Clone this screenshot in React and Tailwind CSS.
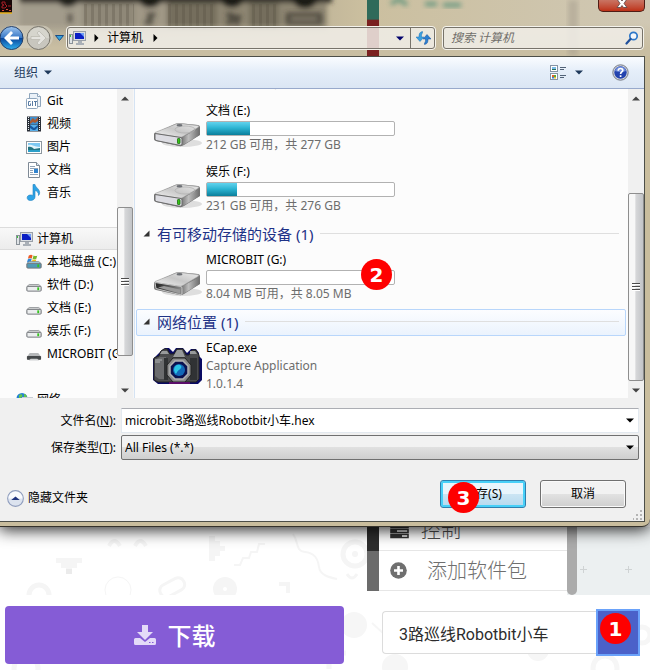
import React from "react";

const uiFont = "font-['Noto_Sans','Noto_Sans_CJK_SC',sans-serif]";

function GlassBackdrop() {
  return (
    <svg className="absolute inset-0 h-full w-full" viewBox="0 0 650 57" preserveAspectRatio="none" aria-hidden="true">
      <defs>
        <filter id="soft" x="-20%" y="-60%" width="140%" height="220%">
          <feGaussianBlur stdDeviation="2.500" />
        </filter>
        <linearGradient id="glass" x1="0" x2="1" y1="0" y2="0">
          <stop offset="0" stopColor="#aea797" />
          <stop offset=".5" stopColor="#c2b79a" />
          <stop offset=".56" stopColor="#cbbf9f" />
          <stop offset="1" stopColor="#d0c8b4" />
        </linearGradient>
        <linearGradient id="floor" x1="0" x2="0" y1="0" y2="1">
          <stop offset=".4" stopColor="#c9bea2" stopOpacity="0" />
          <stop offset=".85" stopColor="#c9bea2" />
        </linearGradient>
        <pattern id="ribs" width="7" height="30" patternUnits="userSpaceOnUse">
          <rect width="3" height="30" fill="#514b3e" opacity=".28" />
        </pattern>
      </defs>
      <rect width="650" height="57" fill="url(#glass)" />
      <g filter="url(#soft)">
        <rect x="20" y="-8" width="63" height="40" fill="#a29b8b" />
        <rect x="83" y="-8" width="52" height="40" fill="#8f8878" />
        <rect x="135" y="-8" width="32" height="40" fill="#a09886" />
        <rect x="167" y="-8" width="50" height="38" fill="#756e5d" />
        <rect x="217" y="-8" width="32" height="38" fill="#8e8672" />
        <rect x="249" y="-8" width="30" height="38" fill="#756e5d" />
        <rect x="279" y="-8" width="48" height="38" fill="#8e8672" />
        <rect x="20" y="-8" width="312" height="11" fill="#35322b" />
        <circle cx="68" cy="-5" r="12" fill="#24221f" />
        <circle cx="150" cy="-5" r="13" fill="#1b1a18" />
        <circle cx="232" cy="-5" r="13" fill="#1b1a18" />
        <circle cx="305" cy="-5" r="14" fill="#1b1a18" />
      </g>
      <rect x="84" y="4" width="50" height="26" fill="url(#ribs)" />
      <rect x="168" y="4" width="48" height="26" fill="url(#ribs)" />
      <rect x="250" y="4" width="29" height="26" fill="url(#ribs)" />
      <rect width="650" height="57" fill="url(#floor)" />
      <g filter="url(#soft)" opacity=".75" stroke="#34322c" strokeWidth="4" fill="none">
        <path d="M70 14v9M147 15h6l-6 8h6M226 15h5v8h-5M234 15l3 8 3-8M288 15h32v8h-32z" />
      </g>
      <rect x="367" y="0" width="12" height="22" fill="#2f6a5a" />
      <rect x="367" y="20" width="12" height="37" fill="#7a2020" />
      <g filter="url(#soft)" stroke="#4e8c76" strokeWidth="4" opacity=".8">
        <path d="M391 4l8-5 8 6M425 4h12M443 5h18" fill="none" />
      </g>
      <rect x="568" y="0" width="10" height="57" fill="#a79f8f" opacity=".55" filter="url(#soft)" />
      <rect x="1" y="26" width="52" height="23" rx="11" fill="#d9d4c5" opacity=".6" />
    </svg>
  );
}

function ComputerIcon() {
  return (
    <svg width="17" height="16" viewBox="0 0 17 16" className="shrink-0" aria-hidden="true">
      <rect x=".5" y="4.500" width="3" height="9" fill="#dfe3e6" stroke="#8a9299" />
      <rect x="1" y="5" width="1" height="2" fill="#38c038" />
      <rect x="4.500" y="1.500" width="12" height="9" fill="#d9dde2" stroke="#9aa0a8" />
      <rect x="6" y="3" width="9" height="6" fill="#0a1fc4" />
      <path d="M11 3h4v4z" fill="#6f9cf5" />
      <path d="M9 11h4v2h2v2H7v-2h2z" fill="#aab0b7" />
    </svg>
  );
}

function GitIcon() {
  return (
    <svg width="16" height="16" viewBox="0 0 16 16" className="shrink-0" aria-hidden="true">
      <path d="M3.500.5h8l3 3v10h-11z" fill="#eaf1f8" stroke="#8fa6bd" />
      <path d="M11.500.5v3h3" fill="#fff" stroke="#8fa6bd" />
      <rect x=".5" y="5.500" width="11" height="10" rx="1" fill="#fff" stroke="#8fa6bd" />
      <path d="M4.500 8.500h-2v4h2v-2M6.500 8v5M8 8.500h3M9.500 8.500V13" fill="none" stroke="#587ba3" />
    </svg>
  );
}

function VideoIcon() {
  return (
    <svg width="16" height="16" viewBox="0 0 16 16" className="shrink-0" aria-hidden="true">
      <rect x="1" y=".5" width="14" height="15" fill="#2a2f38" />
      <rect x="4" y="1" width="8" height="7" fill="#3e8fd0" />
      <rect x="4" y="8.500" width="8" height="6.500" fill="#58aee8" />
      <path d="M4 5l3-3 2 2 3-3v4l-3 2-2-1-3 2z" fill="#a85a33" />
      <path d="M4 9l4 3 4-3v2l-3 3H7l-3-2z" fill="#17579c" />
      <path d="M2.500 1v14M13.500 1v14" stroke="#e8eef2" strokeDasharray="1 1" />
    </svg>
  );
}

function PictureIcon() {
  return (
    <svg width="16" height="16" viewBox="0 0 16 16" className="shrink-0" aria-hidden="true">
      <rect x=".5" y="2.500" width="15" height="12" fill="#fff" stroke="#8d979f" />
      <rect x="2" y="4" width="12" height="9" fill="#7cc8f2" />
      <path d="M2 6c4-1 6 2 12 2v2H2z" fill="#e2f4fb" />
      <path d="M2 8c3-1 5 1 6 2l6-1v4H2z" fill="#227482" />
      <path d="M2 11h12v2H2z" fill="#2c9fc8" />
    </svg>
  );
}

function DocumentIcon() {
  return (
    <svg width="16" height="16" viewBox="0 0 16 16" className="shrink-0" aria-hidden="true">
      <path d="M2.500.5h8l3 3v12h-11z" fill="#fff" stroke="#7f8a96" />
      <path d="M10.500.5v3h3" fill="#dbe6f0" stroke="#7f8a96" />
      <path d="M4 4.500h5M4 6.500h8M4 8.500h3M4 10.500h3M4 12.500h8" stroke="#92a4b7" />
      <rect x="8" y="7" width="4" height="4" fill="#3184cf" />
    </svg>
  );
}

function MusicIcon() {
  return (
    <svg width="16" height="17" viewBox="0 0 16 17" className="shrink-0" aria-hidden="true">
      <path d="M7 .5h2c.5 3.500 5.500 4.500 4.500 9.500l-1 1.500c.3-3-1.500-4.500-3.500-5v6.500c0 2-2 3.500-4.500 3.500S1 15 1.200 13.300 3 11 5 11c.8 0 1.500.2 2 .5z" fill="#2ea3e6" stroke="#1d7fc0" strokeWidth=".6" />
    </svg>
  );
}

function SmallDrive({ kind }) {
  return (
    <svg width="16" height="16" viewBox="0 0 17 16" className="shrink-0" aria-hidden="true">
      {kind === "system" && (
        <g>
          <path d="M3 1c2-1 3-1 4 0L6 4.500c-1-1-2-1-4 0z" fill="#ee5a24" />
          <path d="M8 1c2 1 3 1 4 0l-1 3.500c-1 1-2 1-4 0z" fill="#79b82f" />
          <path d="M2 5c2-1 3-1 4 0L5 8.500H1z" fill="#2b87dc" />
          <path d="M7 5c2 1 3 1 4 0l-1 3.500H6z" fill="#f5bd17" />
        </g>
      )}
      {kind === "removable" ? (
        <g>
          <path d="M4 7h9l3 4v3H1v-3z" fill="#b6b8ba" />
          <rect x="1" y="10" width="15" height="4" rx="1" fill="#45484a" />
          <path d="M5 13h7l2 2H3z" fill="#d0d2d3" />
        </g>
      ) : (
        <g>
          <path d="M3.500 7.500h10l2.500 2v4.500H1V9.500z" fill={kind === "system" ? "#9ccbdc" : "#d2d4d5"} stroke="#85898d" strokeWidth=".8" />
          <rect x="1" y="9.500" width="15" height="5" rx="1" fill={kind === "system" ? "#5299b4" : "#eceeef"} stroke="#74787c" />
          <rect x="12" y="10.500" width="2" height="3" fill="#36c41f" />
        </g>
      )}
    </svg>
  );
}

function NetworkIcon() {
  return (
    <svg width="17" height="16" viewBox="0 0 17 16" className="shrink-0" aria-hidden="true">
      <circle cx="6" cy="6.500" r="5.500" fill="#2481d3" />
      <path d="M3 3c3-2 4 0 3 2L3 7zM8 2c2 0 3 2 3 4L8 7z" fill="#62c64c" />
      <rect x="6.500" y="5.500" width="10" height="7" fill="#1630c7" stroke="#c7cdd6" />
    </svg>
  );
}

function BigDrive({ open }) {
  return (
    <svg width="50" height="30" viewBox="0 0 50 30" className="block" aria-hidden="true">
      <defs>
        <linearGradient id="driveTop" x1="0" x2="1" y1="1" y2="0">
          <stop offset="0" stopColor="#f2f2f2" />
          <stop offset=".5" stopColor="#c8c8c8" />
          <stop offset="1" stopColor="#ebebeb" />
        </linearGradient>
        <linearGradient id="driveSide" x1="0" x2="1">
          <stop offset="0" stopColor="#6f6f6f" />
          <stop offset=".4" stopColor="#bdbdbd" />
          <stop offset="1" stopColor="#6e6e6e" />
        </linearGradient>
        <linearGradient id="driveMouth" x1="0" x2="1">
          <stop offset="0" stopColor="#222" />
          <stop offset="1" stopColor="#8d8d8d" />
        </linearGradient>
      </defs>
      <ellipse cx="29" cy="23" rx="20" ry="4" fill="#dedede" />
      <path d="M1 13.500 22 4q2-1 5-.7L45 5q2 .5 2 2v8L31 25q-2 1.500-5 1L3 21q-2-.5-2-2z" fill="#777" />
      <path d="M2 12.500 23 4q2-.8 4-.5l17 2q3 .5 1 2L30 16.500q-2 1-4 .7L3 13.500z" fill="url(#driveTop)" stroke="#a0a0a0" strokeWidth=".6" />
      <path d="M29 17.500l17.500-9.500v7L30 25q-1 .5-2 .4z" fill="url(#driveSide)" />
      {open ? (
        <path d="M2 13.500l26 4q1 0 1 2V25q-1 .8-3 .4L3 19.500z" fill="url(#driveMouth)" stroke="#c4c4c4" />
      ) : (
        <path d="M2 13.500l26 4q1 0 1 2v5q-1 1-3 .7L3 20.500q-1-.3-1-2z" fill="#dcdce2" stroke="#6c6c6c" />
      )}
      {open ? (
        <path d="M5 18.500l6-1.500 16 3.500v4z" fill="#9a9a9a" />
      ) : (
        <g>
          <rect x="24.500" y="18.500" width="2.500" height="5" rx=".6" fill="#37c616" stroke="#1c6812" strokeWidth=".8" />
          <ellipse cx="32" cy="9.500" rx="10" ry="3.500" fill="none" stroke="#b3b3b3" strokeWidth=".8" />
        </g>
      )}
      <ellipse cx="26.500" cy="5.300" rx="3" ry="1.200" fill="#6d7075" />
    </svg>
  );
}

function CameraIcon() {
  return (
    <svg width="50" height="38" viewBox="0 0 50 38" className="block" aria-hidden="true">
      <path d="M3 9l5-5 4-3h4l4 4 3-4h7l4 5 4-4h5l3 4v3l3 3v21l-4 4H5l-5-4V12z" fill="#090a63" />
      <path d="M1 11l5-2 2-5 3-2h3l3 5h4l3-5h6l3 6h3l3-5h4l3 5v24l-3 3H5l-4-2z" fill="#4a4b4d" stroke="#222" />
      <path d="M2 13l5-3h6v22H6l-4-3z" fill="#6b6c6e" />
      <path d="M9 4h5l2 3H7zM24 3h5l3 7H20zM37 4h5l2 3h-7z" fill="#989a9b" />
      <path d="M2 13h7M2 15h5" stroke="#aeb0b1" />
      <path d="M11 11h4v22h-4zM37 11h7v22h-7z" fill="#303234" />
      <path d="M20 11h12l6 7v10l-6 7H20l-6-7V18z" fill="#8a8b8c" stroke="#242424" />
      <path d="M22 14h8l5 5v8l-5 5h-8l-5-5v-8z" fill="#0b1250" stroke="#b1b3b3" strokeWidth="1.500" />
      <circle cx="26" cy="23" r="6" fill="#1268b8" />
      <path d="M21 23c0-4 3-6 6-5 2 1 2 3-1 5s-2 5-4 3z" fill="#2bc4e5" />
      <path d="M16 36h21" stroke="#5a0d6a" strokeWidth="2" />
    </svg>
  );
}

function Triangle({ className = "fill-black", up = false }) {
  return (
    <svg width="8" height="5" viewBox="0 0 8 5" className={"shrink-0 " + className} aria-hidden="true">
      <path d={up ? "M0 4.500L4 .5l4 4z" : "M0 .5h8l-4 4z"} />
    </svg>
  );
}

function RightTriangle() {
  return (
    <svg width="5" height="8" viewBox="0 0 5 8" className="shrink-0" aria-hidden="true">
      <path d="M.5 0v8l4-4z" />
    </svg>
  );
}

function AddressBar() {
  return (
    <div className="relative mt-auto mb-[6px] flex h-6 items-center pr-1.5">
      <button aria-label="后退" className="shrink-0">
        <svg width="24" height="26" viewBox="0 0 24 26">
          <defs>
            <linearGradient id="back" x1="0" x2="0" y1="0" y2="1">
              <stop offset="0" stopColor="#9fc5ee" />
              <stop offset=".48" stopColor="#3a79c7" />
              <stop offset=".5" stopColor="#08439a" />
              <stop offset="1" stopColor="#2fb0ee" />
            </linearGradient>
          </defs>
          <circle cx="11.500" cy="13" r="11.500" fill="url(#back)" stroke="#243f69" />
          <path d="M4 13l7-7 2 2-3 3.500h9v3h-9l3 3.500-2 2z" fill="#fff" />
        </svg>
      </button>
      <button aria-label="前进" className="ml-0.5 shrink-0">
        <svg width="25" height="26" viewBox="0 0 25 26">
          <circle cx="12.500" cy="13" r="11.500" fill="#c8c6be" stroke="#77746b" />
          <path d="M2 13a10.500 10.500 0 0 1 21 0z" fill="#d6d5cd" />
          <path d="M20 13l-7-7-2 2 3 3.500H5v3h9L11 18l2 2z" fill="#e4e3de" stroke="#b8b6ad" strokeWidth=".7" />
        </svg>
      </button>
      <button aria-label="最近的页面" className="ml-0.5 flex w-3 shrink-0 justify-center">
        <svg width="9" height="6" viewBox="0 0 9 6">
          <path d="M.5.500h8l-4 5z" fill="#35a1dd" stroke="#194e86" />
        </svg>
      </button>
      <div className="ml-px flex h-6 flex-1 items-center rounded-sm border border-[#f5f3ec] bg-[#f1efe9]/85 outline outline-1 -outline-offset-2 outline-[#77736a]">
        <span className="ml-0.5">
          <ComputerIcon />
        </span>
        <span className="ml-2">
          <RightTriangle />
        </span>
        <button className="ml-2 text-black">计算机</button>
        <span className="ml-2.5">
          <RightTriangle />
        </span>
        <button aria-label="以前的位置" className="ml-auto flex h-full w-5 items-center justify-center">
          <Triangle className="fill-[#02026c]" />
        </button>
        <button aria-label="刷新" className="flex h-[22px] w-[25px] items-center justify-center border-l border-[#77736a]">
          <svg width="15" height="14" viewBox="0 0 15 14">
            <path d="M6.500.5C3.500 1 3 3 3 6H0l4 4.500L8 6H5.500c0-2 0-3 1-4z" fill="#3aa0df" stroke="#1c6fb5" strokeWidth=".5" />
            <path d="M8.500 13.500c3-.5 3.500-2.500 3.500-5.500h3l-4-4.500L7 8h2.500c0 2 0 3-1 4z" fill="#2a7fd0" stroke="#164f9c" strokeWidth=".5" />
          </svg>
        </button>
      </div>
      <div className="ml-1.5 flex h-6 w-[202px] items-center rounded-sm border border-[#f5f3ec] bg-[#f1efe9]/85 pr-1 pl-2 outline outline-1 -outline-offset-2 outline-[#77736a]">
        <input aria-label="搜索 计算机" placeholder="搜索 计算机" className="min-w-0 flex-1 bg-transparent italic outline-none placeholder:text-[#716f6b]" />
        <svg width="14" height="14" viewBox="0 0 14 14" aria-hidden="true">
          <circle cx="8.500" cy="5" r="3.700" fill="#f4f7fb" stroke="#2e78c9" strokeWidth="1.700" />
          <path d="M5.500 8L1.500 12.500" stroke="#20509b" strokeWidth="2.200" strokeLinecap="round" />
        </svg>
      </div>
    </div>
  );
}

function TitleBar() {
  return (
    <header className="relative flex h-14 flex-col">
      <GlassBackdrop />
      <div className="relative flex items-start justify-between pr-[5px]">
        <svg width="12" height="14" viewBox="0 0 12 14" aria-hidden="true">
          <rect width="12" height="13" fill="#160606" />
          <path d="M2 2h3v2l2 2-2 2H2V6l2-1-2-1zM8 6h3" stroke="#a81e26" fill="none" />
          <path d="M2 10.500h2M6 9.500h2M9 10.500h2" stroke="#d34b38" />
          <path d="M0 13h12" stroke="#e8b31e" strokeWidth="1.500" />
        </svg>
        <button aria-label="关闭" className="flex h-3 w-[47px] items-end justify-center rounded-b-[5px] border border-t-0 border-[#4f1c14] bg-linear-to-b from-[#c97463] to-[#bd2f14]">
          <svg width="12" height="11" viewBox="0 0 12 11">
            <path d="M1 -1h3.500l1.500 2 1.500-2H11L8 3.500l3 4H7.500L6 5.500l-1.500 2H1l3-4z" fill="#fff" stroke="#564243" strokeWidth=".8" />
          </svg>
        </button>
      </div>
      <AddressBar />
    </header>
  );
}

function Toolbar() {
  return (
    <div className="flex h-8 items-center border-b border-[#98a9cb] bg-linear-to-b from-[#fafcff] from-0% via-[#e5eef9] via-45% to-[#dbe6f4] pr-[15px] pl-3.5 text-[#1e395b]">
      <button className="flex items-center gap-1.5">
        组织
        <Triangle className="fill-[#1e395b]" />
      </button>
      <button aria-label="更改您的视图" className="ml-auto">
        <svg width="17" height="16" viewBox="0 0 17 16">
          <rect x=".5" y=".5" width="7" height="6" fill="#fff" stroke="#8693a4" />
          <rect x="2" y="2" width="4" height="2" fill="#79bbe8" />
          <rect x="2" y="4" width="4" height="1" fill="#27705c" />
          <rect x=".5" y="8.500" width="7" height="6" fill="#fff" stroke="#8693a4" />
          <path d="M2 10h2v2H2z" fill="#e75b2b" />
          <path d="M4 10h2v2H4z" fill="#56ab3c" />
          <path d="M2 12h2v1.500H2z" fill="#3483d6" />
          <path d="M4 12h2v1.500H4z" fill="#e9bb2b" />
          <path d="M10 2.500h6M10 4.500h4M10 10.500h6M10 12.500h4" stroke="#516277" />
        </svg>
      </button>
      <button aria-label="更多选项" className="ml-2 flex">
        <Triangle className="fill-[#1e395b]" />
      </button>
      <button aria-label="帮助" className="ml-[29px]">
        <svg width="17" height="17" viewBox="0 0 17 17">
          <circle cx="8.500" cy="8.500" r="7.700" fill="#d6d8dc" stroke="#757b87" />
          <circle cx="8.500" cy="8.500" r="6.200" fill="#2343ae" />
          <path d="M3 7a5.600 5.600 0 0 1 11 0q-5 2-11 0z" fill="#6d8bda" />
          <path d="M6.200 6.700C6.300 3.700 11 3.900 10.800 6.400 10.700 8 8.600 8 8.600 10M8.600 11.300v1.600" fill="none" stroke="#fff" strokeWidth="1.700" />
        </svg>
      </button>
    </div>
  );
}

function NavRow({ icon, label, top = false }) {
  return (
    <li>
      <button
        className={
          top
            ? "flex h-[23px] w-full items-center gap-1 border-y border-[#dcdcdc] bg-linear-to-b from-[#f8f8f8] to-[#ececec] pl-4 whitespace-nowrap"
            : "flex h-[23px] w-full items-center gap-[5px] pl-[26px] whitespace-nowrap"
        }
      >
        {icon}
        <span>{label}</span>
      </button>
    </li>
  );
}

function NavTree() {
  return (
    <nav aria-label="导航窗格" className="w-[117px] shrink-0 overflow-hidden">
      <ul className="mb-[23px]">
        <NavRow icon={<GitIcon />} label="Git" />
        <NavRow icon={<VideoIcon />} label="视频" />
        <NavRow icon={<PictureIcon />} label="图片" />
        <NavRow icon={<DocumentIcon />} label="文档" />
        <NavRow icon={<MusicIcon />} label="音乐" />
      </ul>
      <ul className="mb-[23px]">
        <NavRow top icon={<ComputerIcon />} label="计算机" />
        <NavRow icon={<SmallDrive kind="system" />} label="本地磁盘 (C:)" />
        <NavRow icon={<SmallDrive />} label="软件 (D:)" />
        <NavRow icon={<SmallDrive />} label="文档 (E:)" />
        <NavRow icon={<SmallDrive />} label="娱乐 (F:)" />
        <NavRow icon={<SmallDrive kind="removable" />} label="MICROBIT (G:)" />
      </ul>
      <button className="flex h-[23px] items-center gap-1 pl-4">
        <NetworkIcon />
        <span>网络</span>
      </button>
    </nav>
  );
}

function ScrollBar({ before, thumb, after }) {
  return (
    <div className="flex w-4 shrink-0 flex-col bg-[#f0f0f0]">
      <button aria-label="向上滚动" className="flex h-[18px] items-center justify-center">
        <Triangle up className="fill-[#444]" />
      </button>
      <div className={"basis-0 " + before} />
      <div className={"flex basis-0 flex-col items-center justify-center gap-px rounded-xs border border-[#8e8e8e] bg-linear-to-r from-[#f7f7f7] from-40% via-[#d6d7d9] via-50% to-[#c2c4c7] " + thumb}>
        <i className="h-0.5 w-2 border-t border-[#4b4b4b] bg-white" />
        <i className="h-0.5 w-2 border-t border-[#4b4b4b] bg-white" />
        <i className="h-0.5 w-2 border-t border-[#4b4b4b] bg-white" />
      </div>
      <div className={"basis-0 " + after} />
      <button aria-label="向下滚动" className="flex h-4 items-center justify-center">
        <Triangle className="fill-[#444]" />
      </button>
    </div>
  );
}

function Badge({ n, className }) {
  return (
    <span className={"absolute flex size-[31px] items-center justify-center rounded-full bg-[#fe0000] font-['DejaVu_Sans',sans-serif] text-xl leading-5 font-bold text-white " + className}>
      {n}
    </span>
  );
}

function DriveItem({ name, detail, used, open, badge }) {
  return (
    <div className="flex h-[61px] shrink-0 gap-[3px] pt-[3px] pl-[17px]">
      <div className="w-[50px] shrink-0 pt-[18px]">
        <BigDrive open={open} />
      </div>
      <div>
        <p className="h-[18px] leading-[18px]">{name}</p>
        <div className="relative mt-px h-[15px] w-[189px] rounded-xs border border-[#b2b2b2] bg-white">
          <div
            className="h-full bg-linear-to-b from-[#5fd3ee] from-0% via-[#2cb5d3] via-45% to-[#0a7f9b]"
            style={{ width: used + "%" }}
          />
          {badge && <Badge n={badge} className="-top-3 right-0.5" />}
        </div>
        <p className="h-[18px] leading-[18px] text-[#6d6d6d]">{detail}</p>
      </div>
    </div>
  );
}

function GroupHeader({ label, active }) {
  return (
    <h2
      className={
        "mr-0.5 flex h-[27px] shrink-0 items-center gap-[7px] rounded-xs border pr-1.5 pb-0.5 pl-1.5 text-[15px] text-[#1e3287] " +
        (active ? "border-[#b8d6fb] bg-linear-to-b from-[#fcfdff] to-[#ebf3fd]" : "border-transparent")
      }
    >
      <svg width="7" height="7" viewBox="0 0 7 7" aria-hidden="true">
        <path d="M6.500.5v6h-6z" fill="#333" />
      </svg>
      <span className="font-normal">{label}</span>
      <span className="h-px flex-1 bg-[#dfdfdf]" />
    </h2>
  );
}

function FileList() {
  return (
    <section aria-label="计算机" className="flex min-w-0 flex-1 flex-col justify-end overflow-hidden border-l border-[#d5e3f3] pb-px pl-px">
      <DriveItem name="软件 (D:)" detail="189 GB 可用，共 277 GB" used={32} />
      <DriveItem name="文档 (E:)" detail="212 GB 可用，共 277 GB" used={23} />
      <DriveItem name="娱乐 (F:)" detail="231 GB 可用，共 276 GB" used={16} />
      <GroupHeader label="有可移动存储的设备 (1)" />
      <DriveItem name="MICROBIT (G:)" detail="8.04 MB 可用，共 8.05 MB" used={0} open badge="2" />
      <GroupHeader label="网络位置 (1)" active />
      <div className="flex h-[61px] shrink-0 gap-[3px] pt-[3px] pl-[17px] leading-[18px]">
        <div className="w-[50px] shrink-0 pt-2">
          <CameraIcon />
        </div>
        <div>
          <p>ECap.exe</p>
          <p className="text-[#6d6d6d]">Capture Application</p>
          <p className="text-[#6d6d6d]">1.0.1.4</p>
        </div>
      </div>
    </section>
  );
}

function FileFields() {
  return (
    <div className="grid grid-cols-[116px_1fr] items-center gap-x-[5px] gap-y-0.5 pt-2.5 pr-[5px]">
      <label htmlFor="file-name" className="text-right">
        文件名(<u>N</u>):
      </label>
      <div className="flex h-[25px] items-center border border-[#e3e9ef] border-t-[#abadb3] bg-white pr-1 pl-[3px]">
        <input id="file-name" defaultValue="microbit-3路巡线Robotbit小车.hex" className="min-w-0 flex-1 outline-none" />
        <button aria-label="以前的文件名" className="flex">
          <Triangle />
        </button>
      </div>
      <label htmlFor="file-type" className="text-right">
        保存类型(<u>T</u>):
      </label>
      <div className="grid h-[25px] items-center rounded-xs border border-[#707070] bg-linear-to-b from-[#f2f2f2] from-50% via-[#e0e0e0] via-50% to-[#cfcfcf] pr-1 pl-[3px] *:col-start-1 *:row-start-1">
        <select id="file-type" className="w-full appearance-none bg-transparent outline-none">
          <option>All Files (*.*)</option>
        </select>
        <span className="pointer-events-none justify-self-end">
          <Triangle />
        </span>
      </div>
    </div>
  );
}

function DialogActions() {
  return (
    <div className="mt-5 flex h-7 items-center pr-[18px] pl-[7px]">
      <button className="flex items-center gap-1 pt-2">
        <svg width="17" height="17" viewBox="0 0 16 16" aria-hidden="true">
          <circle cx="8" cy="8" r="7.400" fill="#dce3ef" stroke="#8f9dbd" />
          <path d="M1.500 8a6.500 6.500 0 0 1 13 0z" fill="#fafbfe" />
          <path d="M4 9.500L8 6l4 3.500z" fill="#21357f" />
        </svg>
        隐藏文件夹
      </button>
      <div className="relative ml-auto">
        <button className="h-7 w-[86px] rounded-[3px] border border-[#2f7fae] bg-linear-to-b from-[#e9f5fc] from-50% via-[#cbe5f4] via-50% to-[#b6d9ee] shadow-[inset_0_0_0_2px_#48d0f8]">
          保存(S)
        </button>
        <Badge n="3" className="top-0.5 left-2" />
      </div>
      <button className="ml-3.5 h-7 w-[86px] rounded-[3px] border border-[#707070] bg-linear-to-b from-[#f2f2f2] from-50% via-[#e2e2e2] via-50% to-[#cfcfcf] shadow-[inset_0_0_0_1px_#fafafa]">
        取消
      </button>
    </div>
  );
}

function SaveDialog() {
  return (
    <section role="dialog" aria-label="另存为" className={"relative z-10 rounded-br-lg border-b border-[#35322b] bg-[#c9bd9d] text-xs text-black shadow-[0_2px_16px_1px_#000000d9] " + uiFont}>
      <TitleBar />
      <div className="mr-[5px] border-y border-r border-[#4c4e48] bg-[#f0f0f0]">
        <Toolbar />
        <div className="flex h-[309px] bg-[#fcfcfc]">
          <NavTree />
          <ScrollBar before="grow-[101]" thumb="grow-[148]" after="grow-[26]" />
          <div className="w-px bg-[#f6f6f6]" />
          <FileList />
          <ScrollBar before="grow-[87]" thumb="grow-[187]" after="grow-[1]" />
        </div>
        <FileFields />
        <DialogActions />
        <div className="flex h-[13px] items-end justify-end">
          <svg width="11" height="11" viewBox="0 0 11 11" fill="#b5b5b5" aria-hidden="true">
            <path d="M7 0h2v2H7zM7 4h2v2H7zM3 4h2v2H3zM7 8h2v2H7zM3 8h2v2H3zM-1 8h2v2h-2z" />
          </svg>
        </div>
      </div>
      <div className="h-1" />
    </section>
  );
}

function Doodles() {
  return (
    <svg className="absolute top-0 left-0" width="367" height="68" viewBox="0 0 367 68" fill="none" stroke="#f5f5f5" strokeWidth="4" aria-hidden="true">
      <path d="M109 19q5-10 11 0M135 19q5-10 11 0" />
      <path d="M56 31h26v5h-5v5h-5v5h-6v-5h-5v-5h-5z" fill="#f5f5f5" stroke="none" />
      <path d="M66 42h6v5h-6z" fill="#ebebeb" stroke="none" />
      <path d="M210 9h5v5h5v5h5v5h-5v5h-5v5h-6V9z" fill="#f5f5f5" stroke="none" />
      <path d="M234 38h6l3-7h6l2-6h6l2-8h6" strokeWidth="2" />
      <path d="M293 7c6 8 2 17 12 18s13 7 14 15 9 10 18 12" strokeWidth="2" />
      <circle cx="118" cy="63" r="13" strokeWidth="1" />
      <path d="M29 68a10 10 0 0 1 20 0" strokeWidth="5" />
      <rect x="159" y="54" width="26" height="13" rx="6" transform="rotate(-28 172 60)" strokeWidth="3" />
      <circle cx="225" cy="62" r="12" fill="#f5f5f5" stroke="none" />
      <circle cx="225" cy="62" r="2" fill="#fff" stroke="none" />
      <path d="M279 57h9v9" />
      <circle cx="355" cy="27" r="12" strokeWidth="5" />
      <circle cx="355" cy="27" r="3" fill="#f5f5f5" stroke="none" />
      <path d="M347 47q5 8 10 0" strokeWidth="3" />
    </svg>
  );
}

function BottomDoodles() {
  return (
    <svg className="absolute inset-0 h-full w-full" viewBox="0 0 650 75" preserveAspectRatio="xMinYMin slice" fill="none" stroke="#f6f6f6" strokeWidth="5" aria-hidden="true">
      <circle cx="354" cy="30" r="13" fill="#f6f6f6" stroke="none" />
      <path d="M329 74v-16h17" />
      <path d="M372 28l12 11" strokeWidth="2" />
      <circle cx="395" cy="72" r="13" fill="#f6f6f6" stroke="none" />
      <circle cx="538" cy="55" r="11" fill="#f6f6f6" stroke="none" />
      <circle cx="605" cy="73" r="12" />
      <circle cx="26" cy="73" r="12" />
      <circle cx="642" cy="40" r="8" />
    </svg>
  );
}

function Toolbox() {
  return (
    <div className="flex w-[283px] shrink-0 bg-[#ecf0f1]">
      <div className="flex w-3 flex-col">
        <div className="h-6 bg-[#2d2d2d]" />
        <div className="h-10 bg-[#6b6b6b]" />
        <div className="flex-1 bg-white" />
      </div>
      <ul className="flex w-[188px] flex-col justify-end overflow-hidden bg-white pb-1 font-['Roboto','Noto_Sans_CJK_SC',sans-serif] text-xl leading-10 font-light">
        <li className="flex h-10 shrink-0 items-center border-b border-[#e6e6e6] pl-[11px] text-[#4c4c4c]">
          <svg width="19" height="16" viewBox="0 0 19 16" className="mr-3" aria-hidden="true">
            <path d="M1 1.500h17v3H1zM1 6.500h17v3H1zM1 11.500h17v3H1z" fill="#fff" stroke="#333" strokeWidth="1.600" />
            <path d="M1 1.500h11v3H1zM1 6.500h6v3H1zM1 11.500h11v3H1z" fill="#333" />
          </svg>
          控制
        </li>
        <li className="flex h-10 shrink-0 items-center border-b border-[#e6e6e6] pl-[11px] text-[#6f6f6f]">
          <svg width="17" height="17" viewBox="0 0 17 17" className="mr-5" aria-hidden="true">
            <circle cx="8.500" cy="8.500" r="8.300" fill="#6f6f6f" />
            <path d="M8.500 4v9M4 8.500h9" stroke="#fff" strokeWidth="2.600" />
          </svg>
          添加软件包
        </li>
      </ul>
      <div className="w-2.5 rounded-b-[5px] bg-[#ababab]" />
      <svg className="mt-[38px] ml-0.5" width="60" height="9" viewBox="0 0 60 9" stroke="#cfd3d4" aria-hidden="true">
        <path d="M4.500 1v7M1 4.500h7M49.500 1v7M46 4.500h7" />
      </svg>
    </div>
  );
}

function EditorFooter() {
  return (
    <footer className="relative flex flex-1 items-start pt-[11px] pb-1.5">
      <BottomDoodles />
      <div className="relative flex-1 pr-[23px] pl-[5px]">
        <button className="flex h-[58px] w-full items-center justify-center gap-3 rounded bg-[#855cd6] font-['Noto_Sans_CJK_SC',sans-serif] text-2xl font-medium text-white">
          <svg width="22" height="20" viewBox="0 0 22 20" aria-hidden="true">
            <path d="M8 0h6v7h5l-8 8-8-8h5z" fill="#e4daf8" />
            <path d="M1.500 13H6l5 4 5-4h4.500q1.500 0 1.500 1.500v4q0 1.500-1.500 1.500h-19Q0 20 0 18.500v-4Q0 13 1.500 13z" fill="#e4daf8" />
            <path d="M15 17.500h1.500M18 17.500h1.500" stroke="#855cd6" />
          </svg>
          下载
        </button>
      </div>
      <div className="relative flex w-[283px] items-center pt-[3px] pr-2.5 pl-[15px]">
        <input
          aria-label="项目名称"
          defaultValue="3路巡线Robotbit小车"
          className="h-[43px] min-w-0 flex-1 rounded-l border border-r-0 border-[#dcdcdc] bg-white px-4 font-['Roboto','Noto_Sans_CJK_SC',sans-serif] text-base leading-5 text-[#2c2c2c] outline-none"
        />
        <div className="relative">
          <button aria-label="保存" className="block h-[47px] w-11 border-2 border-[#6aa2fa] bg-[#4b61c9]" />
          <Badge n="1" className="top-1 left-1" />
        </div>
      </div>
    </footer>
  );
}

export default function App() {
  return (
    <main className="flex min-h-screen flex-col overflow-hidden bg-white">
      <SaveDialog />
      <div className="relative flex h-[68px] justify-end">
        <Doodles />
        <Toolbox />
      </div>
      <EditorFooter />
    </main>
  );
}
